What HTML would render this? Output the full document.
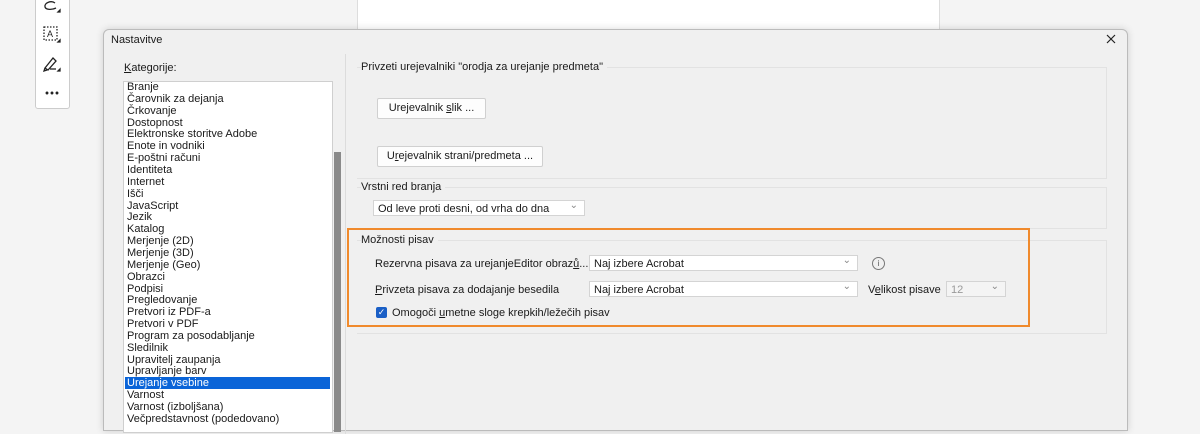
<!DOCTYPE html>
<html><head><meta charset="utf-8"><style>
body{margin:0;width:1200px;height:426px;background:#f4f4f4;position:relative;overflow:hidden;font-family:"Liberation Sans",sans-serif;font-size:11px;color:#1a1a1a}
.a{position:absolute}
.li{position:absolute;left:127px;height:12px;line-height:12px;white-space:nowrap}
.btn{position:absolute;background:#fdfdfd;border:1px solid #d0d0d0;border-radius:2px;line-height:19px;text-align:center}
.dd{position:absolute;background:#fff;border:1px solid #d4d4d4;height:16px;line-height:16px;padding-left:4px;box-sizing:border-box}
.dd:after{content:"⌄";position:absolute;right:6px;top:-3px;color:#888;font-size:10px}
.grp{position:absolute;border:1px solid #e2e2e2;border-left:none}
</style></head><body>
<div class="a" style="left:357px;top:0;width:581px;height:30px;background:#fff;border-left:1px solid #ddd;border-right:1px solid #ddd"></div>
<div class="a" style="left:35px;top:-5px;width:33px;height:112px;background:#fff;border:1px solid #ccc;border-radius:3px"></div>
<svg class="a" style="left:42px;top:0" width="20" height="100" viewBox="0 0 20 100" fill="none" stroke="#222" stroke-width="1.3">
<path d="M13 3 C9 0 2 3 3 7 C4 10 10 10 14 8"/><path d="M16 12 l2 0 0 -2z" fill="#222"/>
<rect x="2" y="27" width="13" height="13" stroke-dasharray="1.5 1.5"/><text x="5" y="37" font-size="9" fill="#222" stroke="none" font-family="Liberation Sans">A</text><path d="M16 42 l2 0 0 -2z" fill="#222"/>
<path d="M3 68 L11 58 L14 61 L6 70 Z M3 68 l-1 3 3 -1"/><path d="M8 69 h6"/><path d="M16 71 l2 0 0 -2z" fill="#222"/>
<circle cx="5" cy="93" r="0.8" fill="#222"/><circle cx="10" cy="93" r="0.8" fill="#222"/><circle cx="15" cy="93" r="0.8" fill="#222"/>
</svg>
<div class="a" style="left:103px;top:29px;width:1023px;height:400px;background:#f0f0f0;border:1px solid #bbb;border-radius:6px 6px 0 0;box-shadow:0 0 8px rgba(0,0,0,.15)"></div>
<div class="a" style="left:111px;top:34px">Nastavitve</div>
<svg class="a" style="left:1106px;top:34px" width="10" height="10"><path d="M1 1L9 9M9 1L1 9" stroke="#222" stroke-width="1.2"/></svg>
<div class="a" style="left:124px;top:62px"><u>K</u>ategorije:</div>
<div class="a" style="left:123px;top:81px;width:208px;height:350px;background:#fff;border:1px solid #cfcfcf"></div>
<div class="a" style="left:334px;top:152px;width:7px;height:280px;background:#8a8a8a"></div>
<div class="a" style="left:345px;top:54px;width:1px;height:380px;background:#dcdcdc"></div>
<div class="a" style="left:125px;top:377px;width:205px;height:12px;background:#0a64d8"></div>
<div class="li" style="top:81px">Branje</div><div class="li" style="top:92.9px">Čarovnik za dejanja</div><div class="li" style="top:104.7px">Črkovanje</div><div class="li" style="top:116.6px">Dostopnost</div><div class="li" style="top:128.4px">Elektronske storitve Adobe</div><div class="li" style="top:140.3px">Enote in vodniki</div><div class="li" style="top:152.1px">E-poštni računi</div><div class="li" style="top:164px">Identiteta</div><div class="li" style="top:175.8px">Internet</div><div class="li" style="top:187.7px">Išči</div><div class="li" style="top:199.5px">JavaScript</div><div class="li" style="top:211.4px">Jezik</div><div class="li" style="top:223.2px">Katalog</div><div class="li" style="top:235.1px">Merjenje (2D)</div><div class="li" style="top:246.9px">Merjenje (3D)</div><div class="li" style="top:258.8px">Merjenje (Geo)</div><div class="li" style="top:270.6px">Obrazci</div><div class="li" style="top:282.5px">Podpisi</div><div class="li" style="top:294.3px">Pregledovanje</div><div class="li" style="top:306.2px">Pretvori iz PDF-a</div><div class="li" style="top:318px">Pretvori v PDF</div><div class="li" style="top:329.9px">Program za posodabljanje</div><div class="li" style="top:341.7px">Sledilnik</div><div class="li" style="top:353.6px">Upravitelj zaupanja</div><div class="li" style="top:365.4px">Upravljanje barv</div><div class="li" style="top:377.3px;color:#fff">Urejanje vsebine</div><div class="li" style="top:389.1px">Varnost</div><div class="li" style="top:401px">Varnost (izboljšana)</div><div class="li" style="top:412.8px">Večpredstavnost (podedovano)</div>
<div class="grp" style="left:357px;top:67px;width:749px;height:110px"></div>
<div class="a" style="left:361px;top:61px;background:#f0f0f0;padding-right:4px">Privzeti urejevalniki "orodja za urejanje predmeta"</div>
<div class="btn" style="left:377px;top:98px;width:107px">Urejevalnik <u>s</u>lik ...</div>
<div class="btn" style="left:377px;top:146px;width:164px">U<u>r</u>ejevalnik strani/predmeta ...</div>
<div class="grp" style="left:357px;top:187px;width:749px;height:40px"></div>
<div class="a" style="left:361px;top:181px;background:#f0f0f0;padding-right:4px">Vrstni red branja</div>
<div class="dd" style="left:373px;top:200px;width:212px">Od leve proti desni, od vrha do dna</div>
<div class="grp" style="left:357px;top:240px;width:749px;height:92px"></div>
<div class="a" style="left:361px;top:234px;background:#f0f0f0;padding-right:4px">Možnosti pisav</div>
<div class="a" style="left:375px;top:258px">Rezervna pisava za urejanjeEditor obraz<u>ů</u>...</div>
<div class="dd" style="left:589px;top:255px;width:269px">Naj izbere Acrobat</div>
<div class="a" style="left:872px;top:257px;width:11px;height:11px;border:1px solid #777;border-radius:50%;font-size:8px;text-align:center;line-height:11px;color:#555">i</div>
<div class="a" style="left:375px;top:284px"><u>P</u>rivzeta pisava za dodajanje besedila</div>
<div class="dd" style="left:589px;top:281px;width:269px">Naj izbere Acrobat</div>
<div class="a" style="left:868px;top:284px">V<u>e</u>likost pisave</div>
<div class="dd" style="left:946px;top:281px;width:60px;background:#f4f4f4;color:#999">12</div>
<div class="a" style="left:376px;top:307px;width:11px;height:11px;background:#1a5fc6;border-radius:2px;color:#fff;font-size:9px;line-height:11px;text-align:center">✓</div>
<div class="a" style="left:392px;top:307px">Omogoči <u>u</u>metne sloge krepkih/ležečih pisav</div>
<div class="a" style="left:347px;top:228px;width:679px;height:95px;border:2px solid #f08a2c"></div>
</body></html>
